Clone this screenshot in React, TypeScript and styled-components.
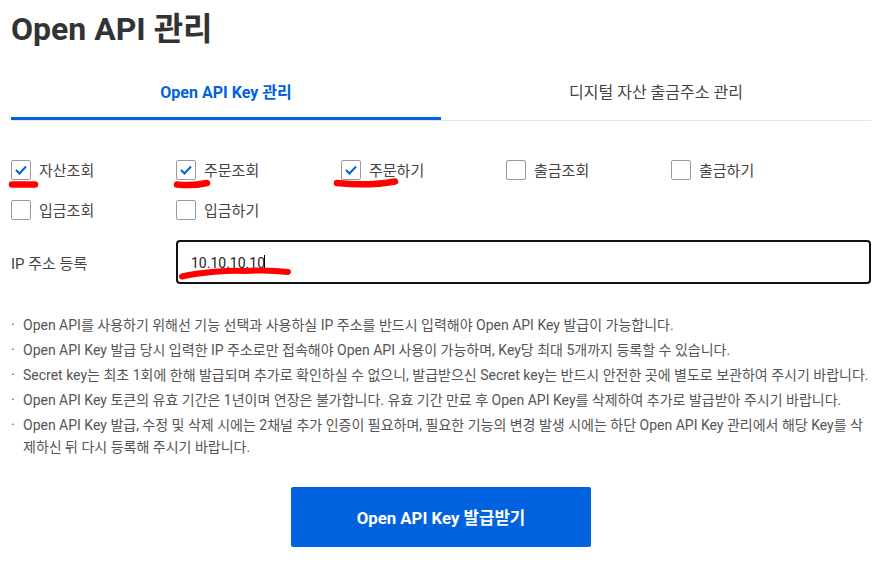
import React from "react";
import styled, { createGlobalStyle } from "styled-components";

const GlobalStyle = createGlobalStyle`
  html, body {
    margin: 0;
    padding: 0;
    background: #fff;
    font-family: Roboto, "Noto Sans CJK KR", sans-serif;
  }
`;

const Page = styled.div`
  width: 883px;
  height: 573px;
  box-sizing: border-box;
  padding: 8px 12px 0 11px;
  overflow: hidden;
`;

const Title = styled.h1`
  margin: 0;
  font-size: 32px;
  line-height: 42px;
  font-weight: 700;
  color: #333;
`;

const Tabs = styled.div`
  display: flex;
  margin-top: 25px;
  height: 45px;
  border-bottom: 1px solid #e5e5e5;
`;

const Tab = styled.div<{ $active?: boolean }>`
  width: 430px;
  height: 45px;
  box-sizing: border-box;
  padding-top: 5px;
  line-height: 26px;
  text-align: center;
  font-size: 16px;
  font-weight: ${(p) => (p.$active ? 700 : 400)};
  color: ${(p) => (p.$active ? "#0062df" : "#444")};
  border-bottom: ${(p) => (p.$active ? "3px solid #0062df" : "none")};
`;

const Options = styled.div`
  display: grid;
  grid-template-columns: repeat(5, 165px);
  grid-auto-rows: 20px;
  row-gap: 20px;
  margin-top: 39px;
`;

const Option = styled.label`
  display: flex;
  align-items: center;
  gap: 8px;
  font-size: 15px;
  line-height: 20px;
  color: #444;
`;

const OptionText = styled.span`
  padding-top: 2px;
`;

const Box = styled.span`
  position: relative;
  width: 20px;
  height: 20px;
  box-sizing: border-box;
  border: 1px solid #9a9a9a;
  border-radius: 2px;
  display: flex;
  align-items: center;
  justify-content: center;
  background: #fff;
`;

const Mark = styled.svg`
  position: absolute;
  overflow: visible;
  pointer-events: none;
`;

const FieldRow = styled.div`
  display: flex;
  align-items: center;
  margin-top: 20px;
`;

const FieldLabel = styled.div`
  width: 165px;
  font-size: 15px;
  color: #444;
`;

const InputBox = styled.div`
  position: relative;
  width: 695px;
  height: 44px;
  box-sizing: border-box;
  border: 2px solid #111;
  border-radius: 4px;
  padding: 2px 0 0 13px;
  display: flex;
  align-items: center;
  font-size: 14px;
  line-height: 16px;
  color: #222;
`;

const Caret = styled.span`
  display: inline-block;
  width: 1px;
  height: 16px;
  background: #000;
  margin-left: -1px;
`;

const Notes = styled.ul`
  list-style: none;
  margin: 30px 0 0;
  padding: 0;
`;

const Note = styled.li`
  position: relative;
  padding-left: 12px;
  margin-bottom: 3px;
  font-size: 14px;
  line-height: 22px;
  color: #555;
  white-space: pre-line;

  &::before {
    content: "·";
    position: absolute;
    left: 0;
    top: 0;
  }
`;

const IssueButton = styled.button`
  display: block;
  width: 300px;
  height: 60px;
  margin: 29px auto 0;
  border: 0;
  border-radius: 2px;
  background: #0062df;
  color: #fff;
  font-family: inherit;
  font-size: 16.8px;
  font-weight: 700;
`;

const options = [
  { label: "자산조회", checked: true, scribble: "M1 24.5 H24" },
  { label: "주문조회", checked: true, scribble: "M1 24.5 C10 25.5 20 25.5 31 23" },
  { label: "주문하기", checked: true, scribble: "M-4 23 C15 25 35 25 54 21.5" },
  { label: "출금조회" },
  { label: "출금하기" },
  { label: "입금조회" },
  { label: "입금하기" },
];

const notes = [
  "Open API를 사용하기 위해선 기능 선택과 사용하실 IP 주소를 반드시 입력해야 Open API Key 발급이 가능합니다.",
  "Open API Key 발급 당시 입력한 IP 주소로만 접속해야 Open API 사용이 가능하며, Key당 최대 5개까지 등록할 수 있습니다.",
  "Secret key는 최초 1회에 한해 발급되며 추가로 확인하실 수 없으니, 발급받으신 Secret key는 반드시 안전한 곳에 별도로 보관하여 주시기 바랍니다.",
  "Open API Key 토큰의 유효 기간은 1년이며 연장은 불가합니다. 유효 기간 만료 후 Open API Key를 삭제하여 추가로 발급받아 주시기 바랍니다.",
  "Open API Key 발급, 수정 및 삭제 시에는 2채널 추가 인증이 필요하며, 필요한 기능의 변경 발생 시에는 하단 Open API Key 관리에서 해당 Key를 삭\n제하신 뒤 다시 등록해 주시기 바랍니다.",
];

export default function App() {
  return (
    <Page>
      <GlobalStyle />
      <Title>Open API 관리</Title>
      <Tabs>
        <Tab $active>Open API Key 관리</Tab>
        <Tab>디지털 자산 출금주소 관리</Tab>
      </Tabs>
      <Options>
        {options.map((o) => (
          <Option key={o.label}>
            <Box>
              {o.checked && (
                <Mark width="20" height="20" viewBox="0 0 20 20" style={{ left: -1, top: -1 }}>
                  <path d="M5 10 L8.5 13.5 L15 6.5" fill="none" stroke="#0062df" strokeWidth="2" />
                  <path d={o.scribble} fill="none" stroke="#f00" strokeWidth="6.5" strokeLinecap="round" />
                </Mark>
              )}
            </Box>
            <OptionText>{o.label}</OptionText>
          </Option>
        ))}
      </Options>
      <FieldRow>
        <FieldLabel>IP 주소 등록</FieldLabel>
        <InputBox>
          <span>10.10.10.10</span>
          <Caret />
          <Mark width="120" height="20" viewBox="0 0 120 20" style={{ left: 2, top: 20 }}>
            <path d="M2 14.5 C20 10 50 8 65 9 C80 8 100 9 108 10" fill="none" stroke="#f00" strokeWidth="6" strokeLinecap="round" />
          </Mark>
        </InputBox>
      </FieldRow>
      <Notes>
        {notes.map((n) => (
          <Note key={n}>{n}</Note>
        ))}
      </Notes>
      <IssueButton>Open API Key 발급받기</IssueButton>
    </Page>
  );
}
